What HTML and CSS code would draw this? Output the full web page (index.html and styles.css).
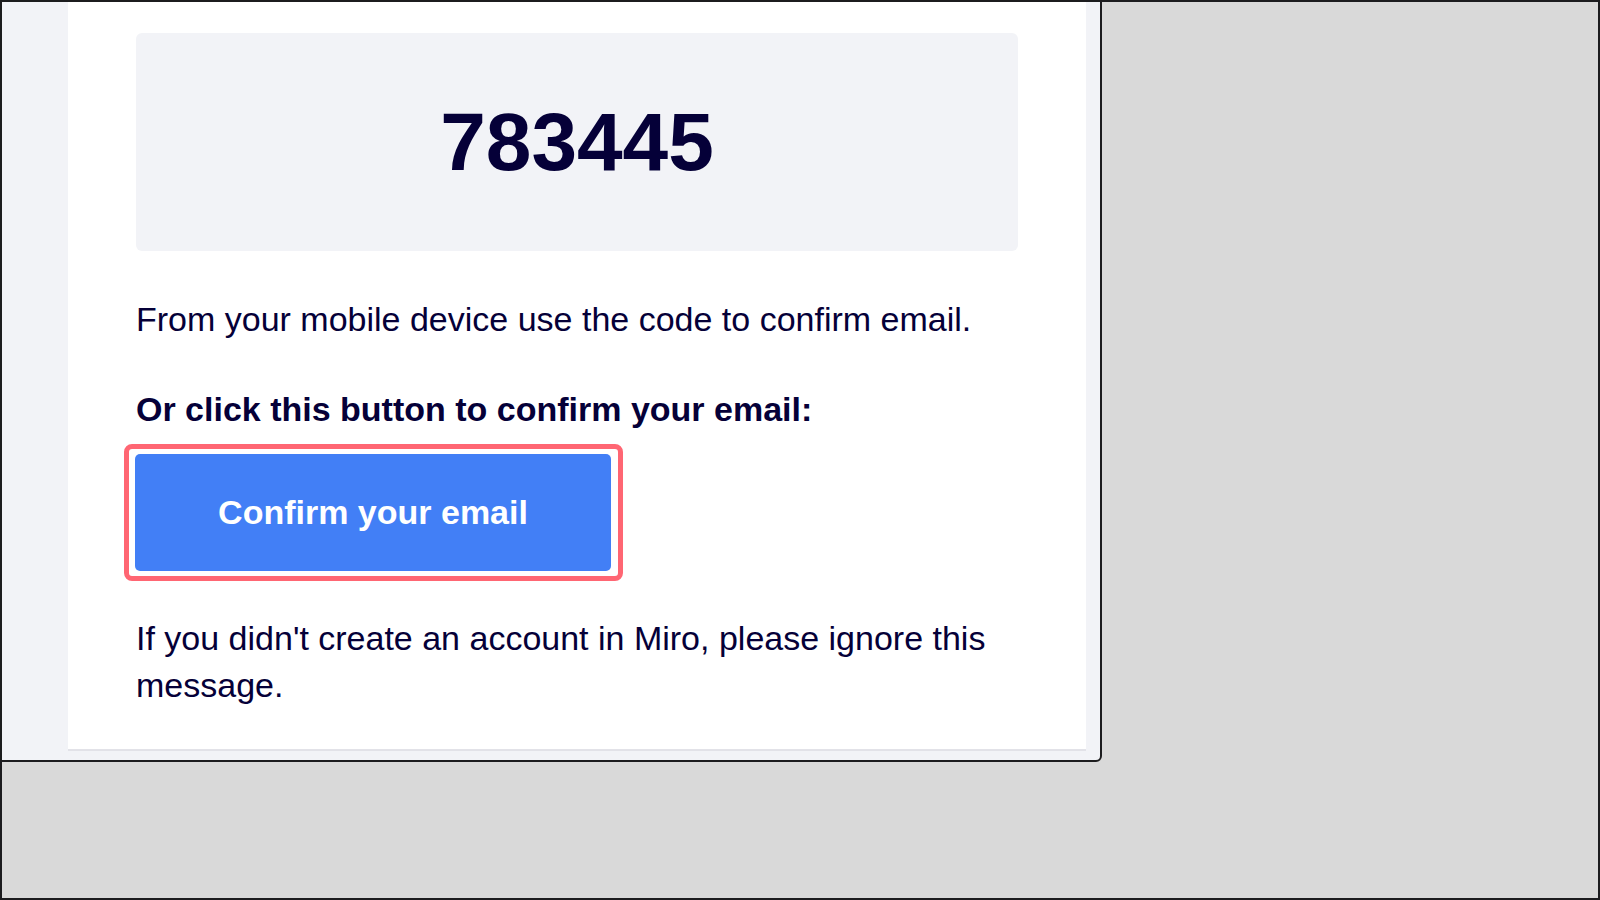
FILE: index.html
```html
<!DOCTYPE html>
<html lang="en">
<head>
<meta charset="utf-8">
<title>Confirm your email</title>
<link rel="stylesheet" href="styles.css">
</head>
<body>
<div class="page">
  <div class="window">
    <div class="card">
      <div class="code-box">783445</div>
      <p class="text">From your mobile device use the code to confirm email.</p>
      <p class="text bold">Or click this button to confirm your email:</p>
      <div class="highlight">
        <a class="btn" href="#">Confirm your email</a>
      </div>
      <p class="text last">If you didn't create an account in Miro, please ignore this message.</p>
    </div>
  </div>
</div>
</body>
</html>
```

FILE: styles.css
```css
* { box-sizing: border-box; }
html, body { margin: 0; padding: 0; }
body {
  font-family: "Liberation Sans", Arial, Helvetica, sans-serif;
  color: #050038;
}
.page {
  width: 1600px;
  height: 900px;
  background: #d9d9d9;
  box-shadow: inset 0 0 0 2px #1c1c1e;
  overflow: hidden;
}
.window {
  width: 1102px;
  height: 762px;
  border: 2px solid #1c1c1e;
  border-bottom-right-radius: 6px;
  background: #f2f3f7;
  padding: 0 14px 9px 66px;
  display: flex;
  flex-direction: column;
  justify-content: flex-end;
}
.card {
  background: #ffffff;
  border-bottom: 2px solid #e2e2e8;
  padding: 31px 68px 40px 68px;
  display: flex;
  flex-direction: column;
  align-items: flex-start;
}
.code-box {
  width: 882px;
  height: 218px;
  background: #f2f3f7;
  border-radius: 6px;
  display: flex;
  align-items: center;
  justify-content: center;
  font-size: 82px;
  font-weight: 700;
  line-height: 1;
  color: #050038;
}
.text {
  margin: 45px 0 0 0;
  font-size: 34px;
  line-height: 47px;
  width: 882px;
}
.bold {
  font-weight: 700;
  margin-top: 43px;
}
.highlight {
  margin: 11px 0 0 -12px;
  border: 5px solid #ff6673;
  border-radius: 8px;
  padding: 5px 7px 5px 6px;
  background: #ffffff;
}
.btn {
  display: flex;
  align-items: center;
  justify-content: center;
  width: 476px;
  height: 117px;
  background: #427ff6;
  border-radius: 5px;
  color: #ffffff;
  font-size: 34px;
  font-weight: 700;
  text-decoration: none;
}
.last {
  margin-top: 34px;
}
```
